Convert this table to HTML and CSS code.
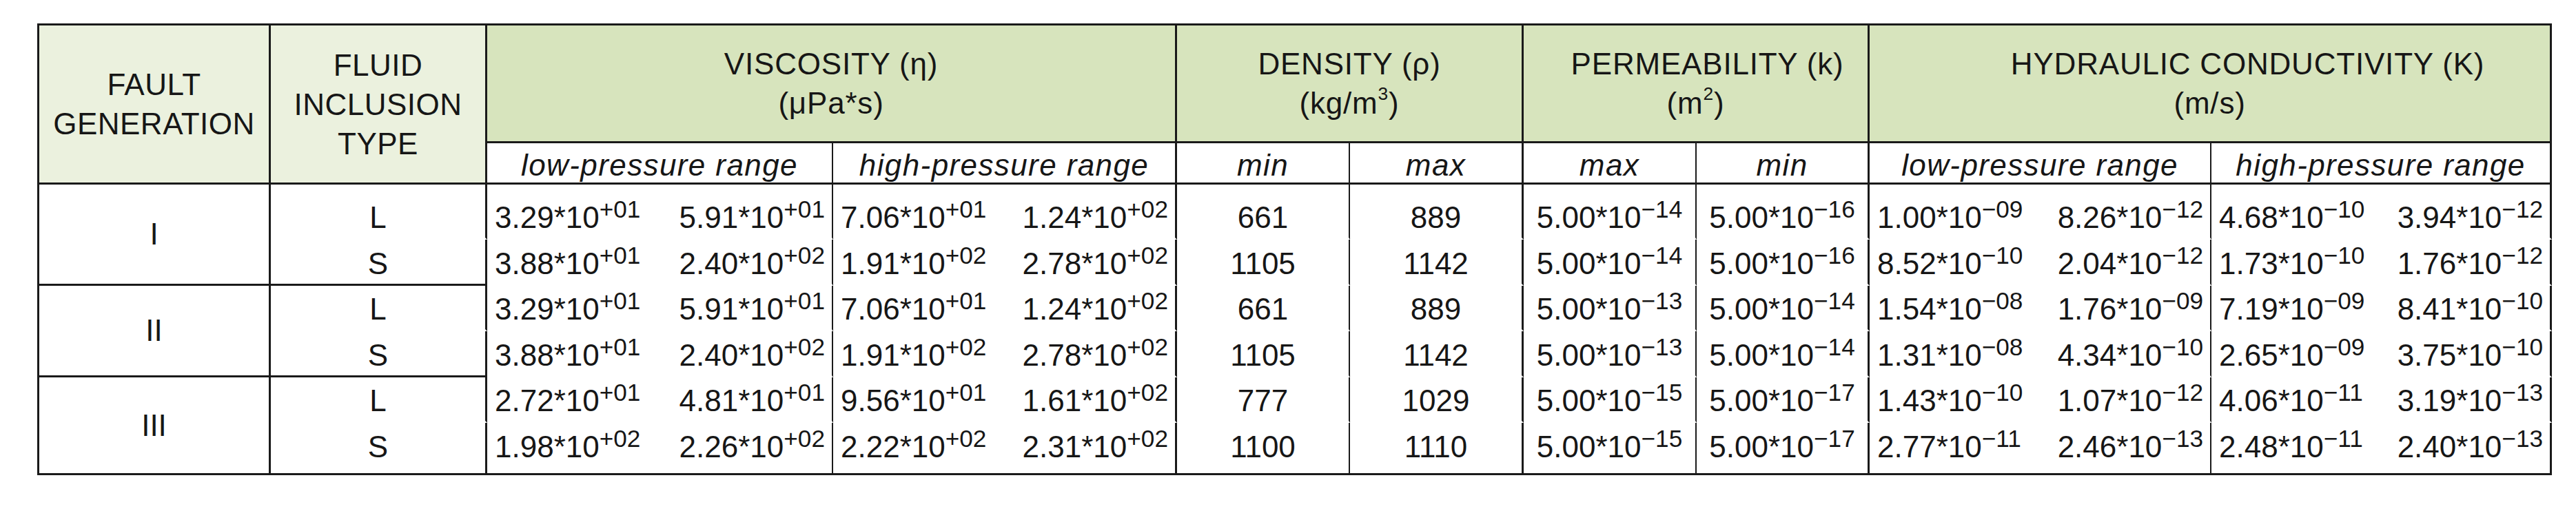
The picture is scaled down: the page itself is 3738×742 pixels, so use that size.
FILE: index.html
```html
<!DOCTYPE html>
<html lang="en">
<head>
<meta charset="utf-8">
<title>Fluid inclusion properties</title>
<link rel="stylesheet" href="styles.css">
</head>
<body>
<table class="props">
  <colgroup>
    <col class="c-gen"><col class="c-type">
    <col class="c-wide1"><col class="c-wide2">
    <col class="c-n1"><col class="c-n2">
    <col class="c-n3"><col class="c-n4">
    <col class="c-wide3"><col class="c-wide4">
  </colgroup>
  <thead>
    <tr class="head-main">
      <th rowspan="2" class="key major">FAULT<br>GENERATION</th>
      <th rowspan="2" class="key major">FLUID<br>INCLUSION<br>TYPE</th>
      <th colspan="2" class="grp major">VISCOSITY (η)<br>(μPa*s)</th>
      <th colspan="2" class="grp major">DENSITY (ρ)<br>(kg/m<sup class="u">3</sup>)</th>
      <th colspan="2" class="grp major"><span class="lead-s">PERMEABILITY (k)</span><br>(m<sup class="u">2</sup>)</th>
      <th colspan="2" class="grp major"><span class="lead-l">HYDRAULIC CONDUCTIVITY (K)</span><br>(m/s)</th>
    </tr>
    <tr class="head-sub">
      <th class="sub minor">low-pressure range</th>
      <th class="sub major">high-pressure range</th>
      <th class="sub minor">min</th>
      <th class="sub major">max</th>
      <th class="sub minor">max</th>
      <th class="sub major">min</th>
      <th class="sub minor">low-pressure range</th>
      <th class="sub major">high-pressure range</th>
    </tr>
  </thead>
  <tbody>
    <tr class="r-1">
      <td rowspan="2" class="gen major end">I</td>
      <td class="type major">L</td>
      <td class="minor"><div class="pair"><span>3.29*10<sup class="e">+01</sup></span><span>5.91*10<sup class="e">+01</sup></span></div></td>
      <td class="major"><div class="pair"><span>7.06*10<sup class="e">+01</sup></span><span>1.24*10<sup class="e">+02</sup></span></div></td>
      <td class="num minor">661</td>
      <td class="num major">889</td>
      <td class="num minor">5.00*10<sup class="e">−14</sup></td>
      <td class="num major">5.00*10<sup class="e">−16</sup></td>
      <td class="minor"><div class="pair"><span>1.00*10<sup class="e">−09</sup></span><span>8.26*10<sup class="e">−12</sup></span></div></td>
      <td class="major"><div class="pair"><span>4.68*10<sup class="e">−10</sup></span><span>3.94*10<sup class="e">−12</sup></span></div></td>
    </tr>
    <tr class="r-2">
      <td class="type major end">S</td>
      <td class="minor"><div class="pair"><span>3.88*10<sup class="e">+01</sup></span><span>2.40*10<sup class="e">+02</sup></span></div></td>
      <td class="major"><div class="pair"><span>1.91*10<sup class="e">+02</sup></span><span>2.78*10<sup class="e">+02</sup></span></div></td>
      <td class="num minor">1105</td>
      <td class="num major">1142</td>
      <td class="num minor">5.00*10<sup class="e">−14</sup></td>
      <td class="num major">5.00*10<sup class="e">−16</sup></td>
      <td class="minor"><div class="pair"><span>8.52*10<sup class="e">−10</sup></span><span>2.04*10<sup class="e">−12</sup></span></div></td>
      <td class="major"><div class="pair"><span>1.73*10<sup class="e">−10</sup></span><span>1.76*10<sup class="e">−12</sup></span></div></td>
    </tr>
    <tr class="r-3">
      <td rowspan="2" class="gen major end">II</td>
      <td class="type major">L</td>
      <td class="minor"><div class="pair"><span>3.29*10<sup class="e">+01</sup></span><span>5.91*10<sup class="e">+01</sup></span></div></td>
      <td class="major"><div class="pair"><span>7.06*10<sup class="e">+01</sup></span><span>1.24*10<sup class="e">+02</sup></span></div></td>
      <td class="num minor">661</td>
      <td class="num major">889</td>
      <td class="num minor">5.00*10<sup class="e">−13</sup></td>
      <td class="num major">5.00*10<sup class="e">−14</sup></td>
      <td class="minor"><div class="pair"><span>1.54*10<sup class="e">−08</sup></span><span>1.76*10<sup class="e">−09</sup></span></div></td>
      <td class="major"><div class="pair"><span>7.19*10<sup class="e">−09</sup></span><span>8.41*10<sup class="e">−10</sup></span></div></td>
    </tr>
    <tr class="r-4">
      <td class="type major end">S</td>
      <td class="minor"><div class="pair"><span>3.88*10<sup class="e">+01</sup></span><span>2.40*10<sup class="e">+02</sup></span></div></td>
      <td class="major"><div class="pair"><span>1.91*10<sup class="e">+02</sup></span><span>2.78*10<sup class="e">+02</sup></span></div></td>
      <td class="num minor">1105</td>
      <td class="num major">1142</td>
      <td class="num minor">5.00*10<sup class="e">−13</sup></td>
      <td class="num major">5.00*10<sup class="e">−14</sup></td>
      <td class="minor"><div class="pair"><span>1.31*10<sup class="e">−08</sup></span><span>4.34*10<sup class="e">−10</sup></span></div></td>
      <td class="major"><div class="pair"><span>2.65*10<sup class="e">−09</sup></span><span>3.75*10<sup class="e">−10</sup></span></div></td>
    </tr>
    <tr class="r-5">
      <td rowspan="2" class="gen major end last">III</td>
      <td class="type major">L</td>
      <td class="minor"><div class="pair"><span>2.72*10<sup class="e">+01</sup></span><span>4.81*10<sup class="e">+01</sup></span></div></td>
      <td class="major"><div class="pair"><span>9.56*10<sup class="e">+01</sup></span><span>1.61*10<sup class="e">+02</sup></span></div></td>
      <td class="num minor">777</td>
      <td class="num major">1029</td>
      <td class="num minor">5.00*10<sup class="e">−15</sup></td>
      <td class="num major">5.00*10<sup class="e">−17</sup></td>
      <td class="minor"><div class="pair"><span>1.43*10<sup class="e">−10</sup></span><span>1.07*10<sup class="e">−12</sup></span></div></td>
      <td class="major"><div class="pair"><span>4.06*10<sup class="e">−11</sup></span><span>3.19*10<sup class="e">−13</sup></span></div></td>
    </tr>
    <tr class="r-6">
      <td class="type major end last">S</td>
      <td class="minor last"><div class="pair"><span>1.98*10<sup class="e">+02</sup></span><span>2.26*10<sup class="e">+02</sup></span></div></td>
      <td class="major last"><div class="pair"><span>2.22*10<sup class="e">+02</sup></span><span>2.31*10<sup class="e">+02</sup></span></div></td>
      <td class="num minor last">1100</td>
      <td class="num major last">1110</td>
      <td class="num minor last">5.00*10<sup class="e">−15</sup></td>
      <td class="num major last">5.00*10<sup class="e">−17</sup></td>
      <td class="minor last"><div class="pair"><span>2.77*10<sup class="e">−11</sup></span><span>2.46*10<sup class="e">−13</sup></span></div></td>
      <td class="major last"><div class="pair"><span>2.48*10<sup class="e">−11</sup></span><span>2.40*10<sup class="e">−13</sup></span></div></td>
    </tr>
  </tbody>
</table>
</body>
</html>
```

FILE: styles.css
```css
html, body {
  margin: 0;
  padding: 0;
  background: #ffffff;
}

body {
  font-family: "Liberation Sans", Arial, sans-serif;
  color: #161616;
}

.props {
  margin: 34px 0 0 54px;
  width: 3649px;
  table-layout: fixed;
  border-collapse: separate;
  border-spacing: 0;
  border-left: 3px solid #1a1a1a;
  border-top: 3px solid #1a1a1a;
  font-size: 44px;
}

.c-gen { width: 336px; }
.c-type { width: 314px; }
.c-wide1 { width: 502px; }
.c-wide2 { width: 499px; }
.c-n1 { width: 251px; }
.c-n2 { width: 252px; }
.c-n3 { width: 251px; }
.c-n4 { width: 251px; }
.c-wide3 { width: 496px; }
.c-wide4 { width: 494px; }

.props th,
.props td {
  padding: 0;
  font-weight: normal;
  text-align: center;
  border-bottom: 3px solid transparent;
}

.major { border-right: 3px solid #1a1a1a; }
.minor { border-right: 2px solid #1a1a1a; }

/* header */
.head-main { height: 171px; }
.head-sub { height: 60px; }

.key {
  background: #ebf1de;
  line-height: 57px;
  vertical-align: middle;
  letter-spacing: 0.5px;
  border-bottom-color: #1a1a1a !important;
}

.grp {
  background: #d7e4bd;
  line-height: 57px;
  vertical-align: middle;
  letter-spacing: 0.8px;
  border-bottom-color: #1a1a1a !important;
  padding-bottom: 8px;
}

.lead-s { padding-left: 34px; }
.lead-l { padding-left: 110px; }

.u {
  font-size: 0.6em;
  vertical-align: 0.75em;
  line-height: 0;
}

.sub {
  font-style: italic;
  line-height: 50px;
  vertical-align: bottom;
  letter-spacing: 1.4px;
  padding-bottom: 1px;
  border-bottom-color: #1a1a1a !important;
}

/* body */
.props tbody td {
  line-height: 50px;
  vertical-align: bottom;
  padding-bottom: 4px;
}

.r-1 { height: 80px; }
.r-2 { height: 67px; }
.r-3 { height: 66px; }
.r-4 { height: 67px; }
.r-5 { height: 66px; }
.r-6 { height: 76px; }

.props tbody td.gen {
  vertical-align: middle;
  padding-bottom: 0;
}

.end { border-bottom-color: #1a1a1a !important; }
.last { border-bottom-color: #1a1a1a !important; }

.props tbody .r-6 td { padding-bottom: 13px; }

.pair {
  display: flex;
  justify-content: space-between;
  padding: 0 10px 0 11px;
  white-space: nowrap;
}

.num { white-space: nowrap; }

.e {
  font-size: 0.8em;
  vertical-align: 0.43em;
  line-height: 0;
}
```
